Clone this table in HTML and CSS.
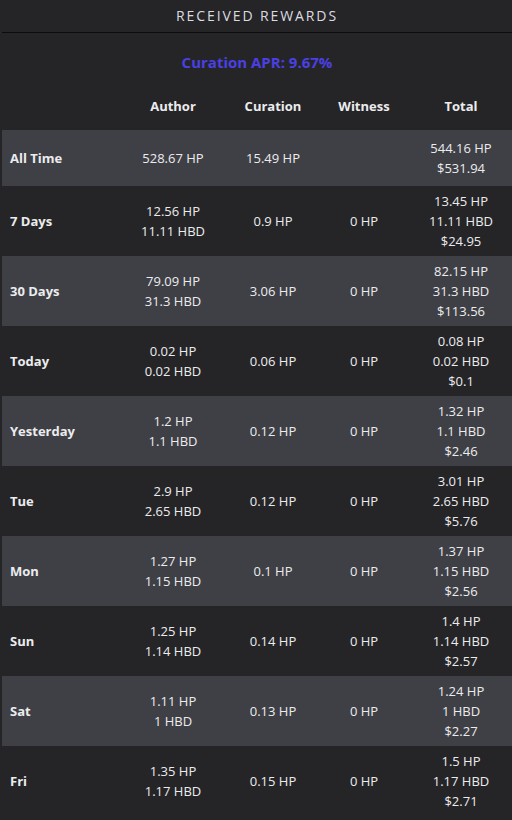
FILE: index.html
```html
<!DOCTYPE html>
<html>
<head>
<meta charset="utf-8">
<link rel="stylesheet" href="styles.css">
</head>
<body>
<div class="panel">
  <div class="title">RECEIVED REWARDS</div>
  <div class="apr">Curation APR: 9.67%</div>
  <table class="rewards">
    <thead>
      <tr><th class="label"></th><th>Author</th><th>Curation</th><th>Witness</th><th>Total</th></tr>
    </thead>
    <tbody>
      <tr class="alt first"><td class="label">All Time</td><td>528.67 HP</td><td>15.49 HP</td><td></td><td>544.16 HP<br>$531.94</td></tr>
      <tr><td class="label">7 Days</td><td>12.56 HP<br>11.11 HBD</td><td>0.9 HP</td><td>0 HP</td><td>13.45 HP<br>11.11 HBD<br>$24.95</td></tr>
      <tr class="alt"><td class="label">30 Days</td><td>79.09 HP<br>31.3 HBD</td><td>3.06 HP</td><td>0 HP</td><td>82.15 HP<br>31.3 HBD<br>$113.56</td></tr>
      <tr><td class="label">Today</td><td>0.02 HP<br>0.02 HBD</td><td>0.06 HP</td><td>0 HP</td><td>0.08 HP<br>0.02 HBD<br>$0.1</td></tr>
      <tr class="alt"><td class="label">Yesterday</td><td>1.2 HP<br>1.1 HBD</td><td>0.12 HP</td><td>0 HP</td><td>1.32 HP<br>1.1 HBD<br>$2.46</td></tr>
      <tr><td class="label">Tue</td><td>2.9 HP<br>2.65 HBD</td><td>0.12 HP</td><td>0 HP</td><td>3.01 HP<br>2.65 HBD<br>$5.76</td></tr>
      <tr class="alt"><td class="label">Mon</td><td>1.27 HP<br>1.15 HBD</td><td>0.1 HP</td><td>0 HP</td><td>1.37 HP<br>1.15 HBD<br>$2.56</td></tr>
      <tr><td class="label">Sun</td><td>1.25 HP<br>1.14 HBD</td><td>0.14 HP</td><td>0 HP</td><td>1.4 HP<br>1.14 HBD<br>$2.57</td></tr>
      <tr class="alt"><td class="label">Sat</td><td>1.11 HP<br>1 HBD</td><td>0.13 HP</td><td>0 HP</td><td>1.24 HP<br>1 HBD<br>$2.27</td></tr>
      <tr><td class="label">Fri</td><td>1.35 HP<br>1.17 HBD</td><td>0.15 HP</td><td>0 HP</td><td>1.5 HP<br>1.17 HBD<br>$2.71</td></tr>
    </tbody>
  </table>
</div>
</body>
</html>
```
FILE: styles.css
```css
html, body {
  margin: 0;
  padding: 0;
  background: #252528;
}
body {
  font-family: "Open Sans", "Noto Sans", sans-serif;
  color: #ececee;
  font-size: 13px;
}
.panel {
  padding-left: 2px;
  width: 510px;
}
.title {
  height: 32px;
  line-height: 31px;
  text-align: center;
  font-size: 14px;
  letter-spacing: 1.9px;
  color: #dcdce0;
  border-bottom: 1px solid #0c0c0e;
}
.apr {
  margin-top: 18px;
  text-align: center;
  font-size: 15px;
  font-weight: 700;
  color: #4b40e2;
  line-height: 22px;
}
.rewards {
  margin-top: 21px;
  width: 510px;
  border-collapse: collapse;
  table-layout: fixed;
}
.rewards th {
  font-weight: 700;
  font-size: 13px;
  height: 24px;
  padding: 0 0 12px;
  line-height: 20px;
  text-align: center;
  color: #ececee;
}
.rewards th:nth-child(1), .rewards td:nth-child(1) { width: 116px; }
.rewards th:nth-child(2), .rewards td:nth-child(2) { width: 110px; }
.rewards th:nth-child(3), .rewards td:nth-child(3) { width: 90px; }
.rewards th:nth-child(4), .rewards td:nth-child(4) { width: 92px; }
.rewards td {
  text-align: center;
  padding: 5px 0;
  line-height: 20px;
  vertical-align: middle;
}
.rewards tr.first td {
  padding-top: 8px;
  padding-bottom: 8px;
}
.rewards td.label {
  text-align: left;
  padding-left: 8px;
  font-weight: 700;
}
.rewards tr.alt td {
  background: #3f4046;
}
```
